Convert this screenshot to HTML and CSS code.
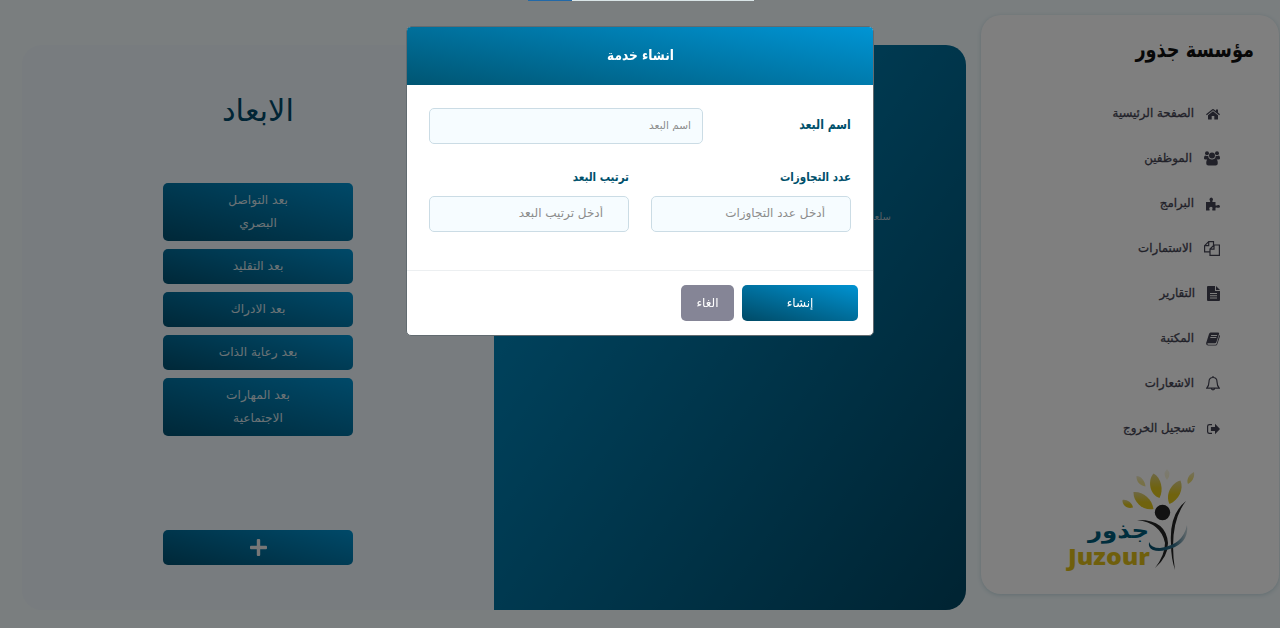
FILE: index.html
```
<!DOCTYPE html>
<html lang="ar" dir="rtl">
<head>
<meta charset="utf-8">
<title>مؤسسة جذور</title>
<link rel="stylesheet" href="styles.css">
</head>
<body>
<div class="page">
  <aside class="sidebar">
    <h1 class="brand">مؤسسة جذور</h1>
    <nav class="menu">
      <a class="item"><svg width="14" height="14" viewBox="0 0 14 14"><path d="M7 4.200 12 8.200V12q0 .6-.6.6H8.3V9H5.7v3.600H2.600Q2 12.600 2 12V8.200zM0 7.300 6.300 2.200q.7-.5 1.400 0L10 4V2.500h2v3.100l2 1.700-.8.9L7 3.300.800 8.200z"/></svg><span>الصفحة الرئيسية</span></a>
      <a class="item"><svg width="16" height="15" viewBox="0 0 16 15"><circle cx="3" cy="2.300" r="2"/><circle cx="13" cy="2.300" r="2"/><circle cx="8" cy="4.500" r="3"/><path d="M0 7.500q0-3 1.500-3Q3 5.500 4.300 4.800 4.300 6.500 5 7.500L3 8.500H1.500Q0 8.500 0 7.500zM16 7.500q0-3-1.500-3-1.500 1-2.800.3 0 1.700-.7 2.700l2 1h1.500q1.500 0 1.500-1zM2.200 12.300q0-4.800 3-4.800 2.800 1.800 5.600 0 3 0 3 4.800 0 2.200-2.200 2.200H4.400q-2.200 0-2.200-2.200z"/></svg><span>الموظفين</span></a>
      <a class="item"><svg width="14" height="14" viewBox="0 0 14 14"><path d="M0 5h3.700q.7 0 .4-1Q3.300 3 3.500 2 4 .5 5.200.500T7 2q.1 1-.6 2-.3 1 .4 1H9.500V8q0 .9 1 .4Q11.600 7.800 12.700 8 14 8.300 14 9.500t-1.300 1.300q-1.100.2-2.200-.3-1-.4-1 .5v2.500H6.500q-.6-.3-.2-1.200.6-1.300-.1-2Q5.500 9.700 4.500 9.900 3.300 10.200 3.200 11.300q0 .6.400 1.200.2.900-.3 1H0z"/></svg><span>البرامج</span></a>
      <a class="item"><svg class="line" width="16" height="15" viewBox="0 0 16 15"><path d="M9.500 4V.6H4.700L.6 4.700v6.200H6M4.700.6v4.100H.6M10 4h5.400v10.400H6V8.100zM10 4v4.100H6"/></svg><span>الاستمارات</span></a>
      <a class="item"><svg width="13" height="15" viewBox="0 0 13 15"><path fill-rule="evenodd" d="M0 1Q0 0 1 0h7v5h5v9q0 1-1 1H1q-1 0-1-1zM3 7v1h7V7zm0 2.300v1h7v-1zm0 2.300v1h7v-1zM9 0l4 4H9z"/></svg><span>التقارير</span></a>
      <a class="item"><svg width="14" height="14" viewBox="0 0 14 14"><path fill-rule="evenodd" d="M4.500.5H12q1.500 0 1 1.500l-2.600 8q-.4 1.300-1.600 1.300H2q-1 0-.7.800.3.600 1.200.600h7q.9 0 1.200-1L13.300 3q.9.500.600 1.500l-2.600 7.700q-.4 1.300-1.700 1.300H2.200Q.2 13.500.1 11.500q0-.9.700-2.500L3 2Q3.500.5 4.500.5zM5.200 3l-.3.900h6l.3-.9zm-.7 2.100-.3.900h6l.3-.9z"/></svg><span>المكتبة</span></a>
      <a class="item"><svg class="line" width="14" height="15" viewBox="0 0 14 15"><path d="M7 1.500q4 0 4 4.300 0 4 2.300 6.300H.7Q3 9.800 3 5.800q0-4.300 4-4.300zM7 0v1.500M5.300 12.200q.1 1.600 1.700 1.600t1.700-1.600"/></svg><span>الاشعارات</span></a>
      <a class="item"><svg width="13" height="12" viewBox="0 0 13 12"><path d="M5 1H2.400Q0 1 0 3.200v5.600Q0 11 2.400 11H5V9.800H2.500Q1.200 9.800 1.200 8.600V3.400q0-1.200 1.300-1.200H5zM8 .8 13 6 8 11.200V8.100H3.900V3.900H8z"/></svg><span>تسجيل الخروج</span></a>
    </nav>
    <svg class="logo" viewBox="0 0 130 106" width="130" height="106">
      <defs>
        <linearGradient id="leaf" x1="0" y1="0" x2="0" y2="1"><stop offset="0" stop-color="#dcd08a"/><stop offset=".6" stop-color="#e0c61c"/></linearGradient>
        <linearGradient id="swoosh" x1="0" y1="0" x2="1" y2="0"><stop offset="0" stop-color="#004d6c"/><stop offset=".65" stop-color="#2f6d88"/><stop offset="1" stop-color="#c9d6dc"/></linearGradient>
      </defs>
      <g fill="url(#leaf)">
        <path d="M22.500 34C26 33 32 36 33 41.500 27 43.500 22 39 22.500 34z"/>
        <path d="M33.500 26C42 25 52 32 53.500 43 43 45 33 36 33.500 26z"/>
        <path d="M53.500 7.500C61 11 64 24 59.500 32 50 29 47 15 53.500 7.500z"/>
        <path d="M80.500 14.500C84 23 79 34 69.500 38 65 29 71 17 80.500 14.500z"/>
        <path d="M36.500 10C41 10 45 15 45.500 20.500 40 20 36 15 36.500 10z" opacity=".5"/>
        <path d="M67 3q5 5 0 11-5-6 0-11z" opacity=".18"/>
        <path d="M94 6c1 5-2 10-6 12-2-4 1-10 6-12z" opacity=".6"/>
      </g>
      <circle cx="62.500" cy="46.500" r="7.700" fill="#242424"/>
      <path fill="#242424" d="M37 54Q66 53 68 77q0 14-13 25 10-13 10-25Q61 57 37 54zM86 35Q68 58 75 104q-4-12-4-26Q69 48 86 35z"/>
      <path fill="url(#swoosh)" d="M49 76q2 6 11 6 23-3 27-23 2 15-12 22-14 6-22 3-5-2-4-8z"/>
      <text class="logo-ar" x="-12" y="72" textLength="61" lengthAdjust="spacingAndGlyphs">جذور</text>
      <text class="logo-en" x="-32" y="99" textLength="82" lengthAdjust="spacingAndGlyphs">Juzour</text>
    </svg>
  </aside>
  <main class="board">
    <section class="details"><p>سلعد</p></section>
    <section class="dimensions">
      <h2>الابعاد</h2>
      <div class="list">
        <button class="btn">بعد التواصل<br>البصري</button>
        <button class="btn">بعد التقليد</button>
        <button class="btn">بعد الادراك</button>
        <button class="btn">بعد رعاية الذات</button>
        <button class="btn">بعد المهارات<br>الاجتماعية</button>
      </div>
      <button class="btn add" aria-label="إضافة"><svg width="17" height="17" viewBox="0 0 17 17"><path d="M6.800 1q0-1 1-1h1.400q1 0 1 1v5.800H16q1 0 1 1v1.400q0 1-1 1h-5.800V16q0 1-1 1H7.800q-1 0-1-1v-5.800H1q-1 0-1-1V7.800q0-1 1-1h5.800z"/></svg></button>
    </section>
  </main>
</div>
<div class="overlay">
  <div class="progress"><span></span></div>
  <form class="modal">
    <header class="modal-head"><span>انشاء خدمة</span></header>
    <div class="modal-body">
      <div class="row"><label class="big">اسم البعد</label><input class="name" placeholder="اسم البعد"></div>
      <div class="pair">
        <div class="field"><label>عدد التجاوزات</label><input placeholder="أدخل عدد التجاوزات"></div>
        <div class="field"><label>ترتيب البعد</label><input placeholder="أدخل ترتيب البعد"></div>
      </div>
    </div>
    <footer class="modal-foot">
      <button class="btn save" type="button">إنشاء</button>
      <button class="btn cancel" type="button">الغاء</button>
    </footer>
  </form>
</div>
</body>
</html>
```
FILE: styles.css
```
* { box-sizing: border-box; margin: 0; }
body { height: 628px; overflow: hidden; background: #f4fcfe; font-family: "DejaVu Sans", sans-serif; }
button, input { font-family: inherit; }
.page { height: 628px; display: flex; align-items: flex-start; padding: 15px 1px 0 22px; gap: 15px; }
.sidebar { width: 298px; height: 579px; flex: none; background: #fff; border-radius: 20px; box-shadow: 0 1px 4px #c4dce4; padding: 20px 25px 0; }
.brand { height: 32px; line-height: 30px; font-size: 22px; color: #111; white-space: nowrap; transform: scaleX(.805); transform-origin: right; }
.menu { padding: 24px 34px 0 0; }
.item { height: 45px; display: flex; align-items: center; gap: 12px; font-size: 11.800px; color: #434352; -webkit-text-stroke: .3px #434352; }
.item span { padding-bottom: 2px; }
.item svg { fill: #434352; flex: none; }
.item .line { fill: none; stroke: #434352; stroke-width: 1.200; }
.logo { display: block; direction: ltr; margin: 15px 24px 0 0; overflow: visible; }
.logo-ar { font: bold 22px "DejaVu Sans", sans-serif; fill: #005c7b; }
.logo-en { font: 800 23px "Open Sans", sans-serif; fill: #dfbf18; }
.board { flex: 1; height: 565px; margin-top: 30px; display: flex; border-radius: 20px; overflow: hidden; background: #f0f8fe; }
.details { width: 472px; background: linear-gradient(125deg, #0096d2, #004764); padding: 166px 75px 0 0; color: #a8bfca; font-size: 10px; }
.dimensions { width: 472px; display: flex; flex-direction: column; align-items: center; color: #004a6a; padding-top: 42px; }
.dimensions h2 { font-weight: 400; font-size: 30.500px; height: 48px; line-height: 48px; }
.list { height: 395px; padding-top: 48px; display: flex; flex-direction: column; gap: 8px; }
.btn { border: 0; border-radius: 5px; width: 190px; min-height: 35px; padding: 6px; line-height: 23px; font-size: 12px; color: #fff; background: linear-gradient(195deg, #0093d2, #004a66); flex: none; }
.list .btn { font-size: 12.200px; }
.dimensions .btn { background: linear-gradient(195deg, #0093d2, #005070); color: #d9e5eb; }
.dimensions .add { display: flex; align-items: center; justify-content: center; }
.add svg { fill: #eee; }
.overlay { position: fixed; inset: 0; background: rgba(0, 0, 0, .5); }
.progress { position: absolute; left: 528px; top: 0; width: 226px; height: 1px; background: #d9e5e7; }
.progress span { position: absolute; left: 0; width: 44px; height: 1px; background: #2269a8; }
.modal { position: absolute; left: 406px; top: 26px; width: 468px; height: 310px; display: flex; flex-direction: column; background: #fff; border: 1px solid #626b70; border-radius: 5px; overflow: hidden; }
.modal-head { height: 58px; flex: none; line-height: 56px; text-align: center; color: #fff; font-weight: 700; font-size: 14px; background: linear-gradient(190deg, #0095d5, #005572); }
.modal-head span { display: inline-block; transform: scaleX(.87); }
.modal-body { height: 186px; flex: none; padding: 23px 22px 0; border-bottom: 1px solid #eceff1; }
.row { display: flex; align-items: center; justify-content: space-between; height: 36px; }
label { color: #00506b; font-weight: 700; font-size: 12px; transform: scaleX(.86); transform-origin: right; }
.row .big { font-size: 13.500px; transform: translateY(-2px) scaleX(.81); }
input { display: block; width: 200px; height: 36px; border: 1px solid #cbdce5; border-radius: 5px; background: #f6fcff; padding: 0 25px 2px; font-size: 12px; }
input::placeholder { color: #8c8c8c; }
.name { width: 274px; padding: 0 11px 2px; font-size: 10.500px; }
.pair { display: flex; justify-content: space-between; padding-top: 23px; }
.field label { display: block; height: 29px; line-height: 20px; }
.modal-foot { display: flex; gap: 8px; padding: 14px 15px; }
.save { width: 116px; height: 36px; }
.cancel { width: 53px; height: 36px; background: #858596; }
```
